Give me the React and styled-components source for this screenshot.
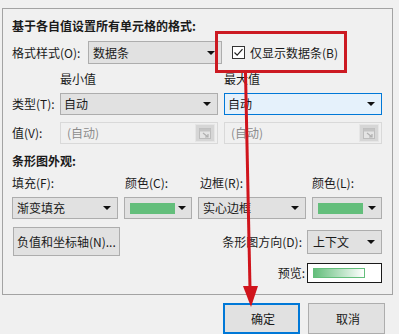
import React from "react";
import styled, { createGlobalStyle, css } from "styled-components";

const Global = createGlobalStyle`
  html, body { margin: 0; padding: 0; background: #f0f0f0; }
  body {
    font-family: "Noto Sans CJK SC", "Microsoft YaHei", "Liberation Sans", sans-serif;
    font-size: 12px;
    color: #1a1a1a;
  }
  * { box-sizing: border-box; }
`;

const Page = styled.div`
  position: relative;
  width: 399px;
  height: 334px;
  overflow: hidden;
  background: #f0f0f0;
`;

const Panel = styled.div`
  margin: 8px 0 0 2px;
  width: 391px;
  height: 287px;
  border: 1px solid #a3a3a3;
  padding-left: 9px;
  display: flex;
  flex-direction: column;
`;

const Heading = styled.div`
  margin-top: ${(p) => p.$mt}px;
  line-height: 16px;
  font-weight: bold;
  white-space: nowrap;
`;

const FormatRow = styled.div`
  margin-top: 7px;
  height: 23px;
  display: flex;
  align-items: center;
`;

const Label = styled.span`
  display: inline-block;
  width: ${(p) => (p.$w ? `${p.$w}px` : "auto")};
  white-space: nowrap;
  line-height: 16px;
  padding-left: ${(p) => p.$pl || 0}px;
`;

const Caret = styled.span`
  width: 0;
  height: 0;
  border-left: 4px solid transparent;
  border-right: 4px solid transparent;
  border-top: 4px solid #111;
  margin-left: auto;
  margin-right: ${(p) => p.$mr ?? 6}px;
  flex: none;
`;

const SelectBox = styled.div`
  width: ${(p) => (p.$w ? `${p.$w}px` : "100%")};
  height: ${(p) => p.$h || 22}px;
  display: flex;
  align-items: center;
  padding-left: ${(p) => p.$pl ?? 3}px;
  background: #e1e1e1;
  border: 1px solid #adadad;
  white-space: nowrap;
  line-height: 16px;
  ${(p) =>
    p.$focus &&
    css`
      background: #e5f1fb;
      border-color: #0078d7;
    `}
`;

const Swatch = styled.span`
  width: ${(p) => p.$w}px;
  height: 11px;
  background: #63be7b;
  margin-left: 3px;
  flex: none;
`;

const CheckWrap = styled.label`
  margin-left: 10px;
  display: flex;
  align-items: center;
  gap: 5px;
  white-space: nowrap;
  line-height: 16px;
`;

const RangeGrid = styled.div`
  margin-top: ${(p) => p.$mt}px;
  height: ${(p) => p.$h}px;
  display: grid;
  grid-template-columns: 42px 158px 158px;
  column-gap: 6px;
  align-items: center;
`;

const ValueField = styled.div`
  height: 22px;
  display: flex;
  align-items: center;
  padding-left: 6px;
  border: 1px solid #d9d9d9;
  background: #f0f0f0;
  color: #8c8c8c;
  line-height: 16px;
`;

const PickButton = styled.span`
  margin-left: auto;
  margin-right: 2px;
  width: 20px;
  height: 18px;
  background: #d6d6d6;
  border: 1px solid #e6e6e6;
  display: flex;
  align-items: center;
  justify-content: center;
`;

const LookGrid = styled.div`
  margin-top: 6px;
  height: ${(p) => p.$h}px;
  display: grid;
  grid-template-columns: 106px 68px 108px 70px;
  column-gap: 6px;
  align-items: center;
`;

const ActionRow = styled.div`
  margin-top: ${(p) => p.$mt}px;
  width: 370px;
  height: ${(p) => p.$h}px;
  display: flex;
  align-items: center;
  justify-content: ${(p) => p.$justify || "space-between"};
`;

const PushButton = styled.button`
  font: inherit;
  color: #1a1a1a;
  height: ${(p) => p.$h}px;
  width: ${(p) => p.$w}px;
  margin-left: ${(p) => p.$ml || 0}px;
  padding: 0 0 0 3px;
  text-align: ${(p) => p.$align || "center"};
  background: #e1e1e1;
  border: 1px solid #adadad;
  line-height: 16px;
  white-space: nowrap;
  ${(p) =>
    p.$default &&
    css`
      border: 2px solid #0078d7;
    `}
`;

const Group = styled.div`
  display: flex;
  align-items: center;
  gap: ${(p) => p.$gap}px;
`;

const PreviewBox = styled.div`
  width: 75px;
  height: 20px;
  background: #fff;
  border: 1px solid #1a1a1a;
  display: flex;
  align-items: center;
  padding-left: 5px;
`;

const PreviewBar = styled.span`
  width: 52px;
  height: 10px;
  border: 1px solid #63be7b;
  background: linear-gradient(to right, #63be7b, #ffffff);
`;

const DialogButtons = styled.div`
  margin-top: 8px;
  padding-right: 14px;
  display: flex;
  justify-content: flex-end;
  gap: 8px;
`;

const Highlight = styled.div`
  position: absolute;
  left: 215px;
  top: 31px;
  width: 132px;
  height: 42px;
  border: 3px solid #cc1a22;
  pointer-events: none;
`;

const Overlay = styled.svg`
  position: absolute;
  left: 0;
  top: 0;
  pointer-events: none;
`;

function CheckIcon() {
  return (
    <svg width="13" height="13" viewBox="0 0 13 13">
      <rect x="0.5" y="0.5" width="12" height="12" fill="#fff" stroke="#333" />
      <path d="M2.5 6.5 L5.2 9.2 L10.5 3.2" fill="none" stroke="#222" strokeWidth="1.2" />
    </svg>
  );
}

function RangeIcon() {
  return (
    <svg width="14" height="13" viewBox="0 0 14 13">
      <rect x="1.5" y="1.5" width="11" height="10" fill="#e4e4e4" stroke="#bdbdbd" />
      <rect x="1.5" y="1.5" width="11" height="3" fill="#c4c4c4" />
      <path d="M5 6 L10 10 M10 7 L10 10 L7 10" fill="none" stroke="#b0b0b0" strokeWidth="1.2" />
    </svg>
  );
}

function Select({ children, w, h, focus, pl }) {
  return (
    <SelectBox $w={w} $h={h} $focus={focus} $pl={pl}>
      {children}
      <Caret />
    </SelectBox>
  );
}

function ColorSelect() {
  return (
    <SelectBox $pl={2}>
      <Swatch $w={45} />
      <Caret $mr={5} />
    </SelectBox>
  );
}

function Value() {
  return (
    <ValueField>
      (自动)
      <PickButton>
        <RangeIcon />
      </PickButton>
    </ValueField>
  );
}

export default function App() {
  return (
    <Page>
      <Global />
      <Panel>
        <Heading $mt={9}>基于各自值设置所有单元格的格式:</Heading>
        <FormatRow>
          <Label $w={76}>格式样式(O):</Label>
          <Select w={134} h={23} pl={4}>数据条</Select>
          <CheckWrap>
            <CheckIcon />
            仅显示数据条(B)
          </CheckWrap>
        </FormatRow>
        <RangeGrid $mt={7} $h={16}>
          <span />
          <Label>最小值</Label>
          <Label>最大值</Label>
        </RangeGrid>
        <RangeGrid $mt={6} $h={22}>
          <Label>类型(T):</Label>
          <Select>自动</Select>
          <Select focus>自动</Select>
        </RangeGrid>
        <RangeGrid $mt={7} $h={22}>
          <Label>值(V):</Label>
          <Value />
          <Value />
        </RangeGrid>
        <Heading $mt={9}>条形图外观:</Heading>
        <LookGrid $h={16}>
          <Label>填充(F):</Label>
          <Label $pl={1}>颜色(C):</Label>
          <Label $pl={2}>边框(R):</Label>
          <Label>颜色(L):</Label>
        </LookGrid>
        <LookGrid $h={22}>
          <Select pl={4}>渐变填充</Select>
          <ColorSelect />
          <Select pl={4}>实心边框</Select>
          <ColorSelect />
        </LookGrid>
        <ActionRow $mt={8} $h={29}>
          <PushButton $w={107} $h={29} $ml={1} $align="left">
            负值和坐标轴(N)...
          </PushButton>
          <Group $gap={5}>
            <Label>条形图方向(D):</Label>
            <Select w={75} h={24} pl={5}>上下文</Select>
          </Group>
        </ActionRow>
        <ActionRow $mt={7} $h={20} $justify="flex-end">
          <Group $gap={2}>
            <Label>预览:</Label>
            <PreviewBox>
              <PreviewBar />
            </PreviewBox>
          </Group>
        </ActionRow>
      </Panel>
      <DialogButtons>
        <PushButton $w={77} $h={31} $default>
          确定
        </PushButton>
        <PushButton $w={77} $h={31}>
          取消
        </PushButton>
      </DialogButtons>

      <Highlight />
      <Overlay width="399" height="334" viewBox="0 0 399 334">
        <line x1="245.5" y1="73" x2="250" y2="289" stroke="#d0141c" strokeWidth="3" />
        <polygon points="243,286 258,286 251,307" fill="#d0141c" />
      </Overlay>
    </Page>
  );
}
